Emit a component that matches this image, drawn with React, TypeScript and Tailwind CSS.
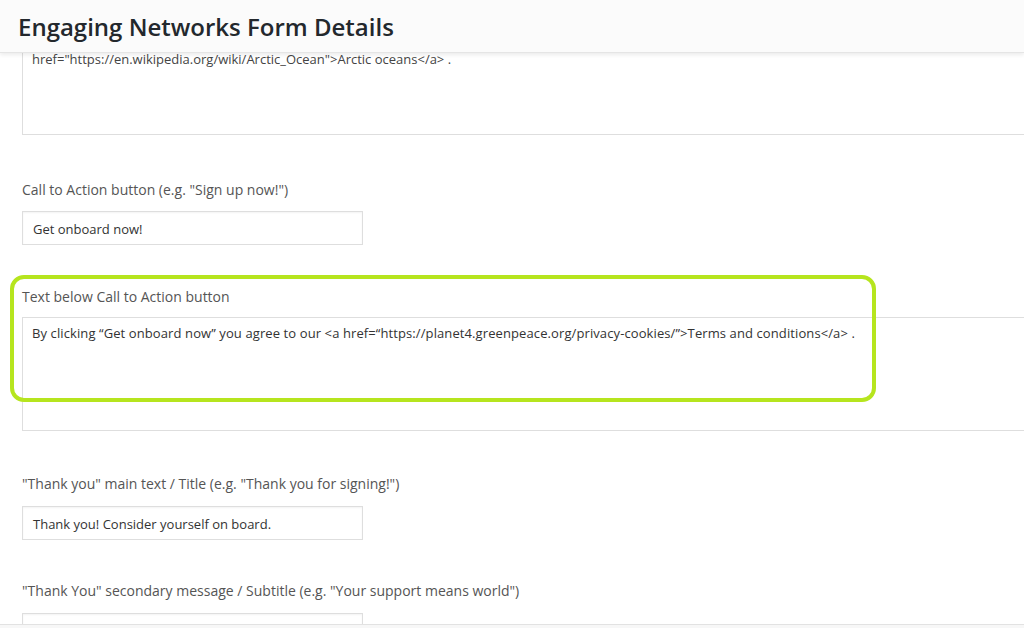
const font = { fontFamily: '"Open Sans", "Noto Sans", sans-serif' };

function Label({ children, className = '' }: { children: React.ReactNode; className?: string }) {
  return <div className={`text-[14px] leading-5 text-[#555] ${className}`}>{children}</div>;
}

function Input({ value, className = '' }: { value?: string; className?: string }) {
  return (
    <div className={`w-[341px] h-[34px] border border-[#dedede] shadow-[inset_0_1px_2px_rgba(0,0,0,0.05)] bg-white px-[10px] pt-[3px] flex items-center text-[13px] text-[#333] ${className}`}>
      {value}
    </div>
  );
}

export default function App() {
  return (
    <div className="relative h-[628px] w-[1024px] overflow-hidden bg-white" style={font}>
      <header className="relative z-10 h-[53px] bg-[#fbfbfb] shadow-[0_2px_4px_rgba(0,0,0,0.08)] border-b border-[#e5e5e5] flex items-center pl-[18px] pt-[2px]">
        <h1 className="text-[24px] font-semibold text-[#23282d]">Engaging Networks Form Details</h1>
      </header>

      <div className="pl-[22px]">
        <div className="-mt-[6px] w-[1040px] h-[88px] border-x border-b border-[#dedede] px-[9px] pt-[2px] text-[13px] leading-5 text-[#444]">
          href=&quot;https://en.wikipedia.org/wiki/Arctic_Ocean&quot;&gt;Arctic oceans&lt;/a&gt; .
        </div>

        <Label className="mt-[45px]">Call to Action button (e.g. &quot;Sign up now!&quot;)</Label>
        <Input className="mt-[11px]" value="Get onboard now!" />

        <Label className="mt-[42px]">Text below Call to Action button</Label>
        <div className="mt-[10px] w-[1040px] h-[114px] border border-[#dedede] px-[9px] pt-[5px] text-[13px] leading-5 text-[#333] tracking-[0.1px]">
          By clicking &ldquo;Get onboard now&rdquo; you agree to our &lt;a href=&ldquo;https://planet4.greenpeace.org/privacy-cookies/&rdquo;&gt;Terms and conditions&lt;/a&gt; .
        </div>

        <Label className="mt-[43px]">&quot;Thank you&quot; main text / Title (e.g. &quot;Thank you for signing!&quot;)</Label>
        <Input className="mt-[12px]" value="Thank you! Consider yourself on board." />

        <Label className="mt-[41px]">&quot;Thank You&quot; secondary message / Subtitle (e.g. &quot;Your support means world&quot;)</Label>
        <Input className="mt-[12px]" />
      </div>

      <div className="absolute left-[10px] top-[275px] w-[866px] h-[127px] rounded-[14px] border-[4px] border-[#b6e51e]" />

      <div className="absolute left-0 right-0 bottom-0 h-[4px] bg-[#f7f7f7] border-t border-[#e2e2e2]" />
    </div>
  );
}
